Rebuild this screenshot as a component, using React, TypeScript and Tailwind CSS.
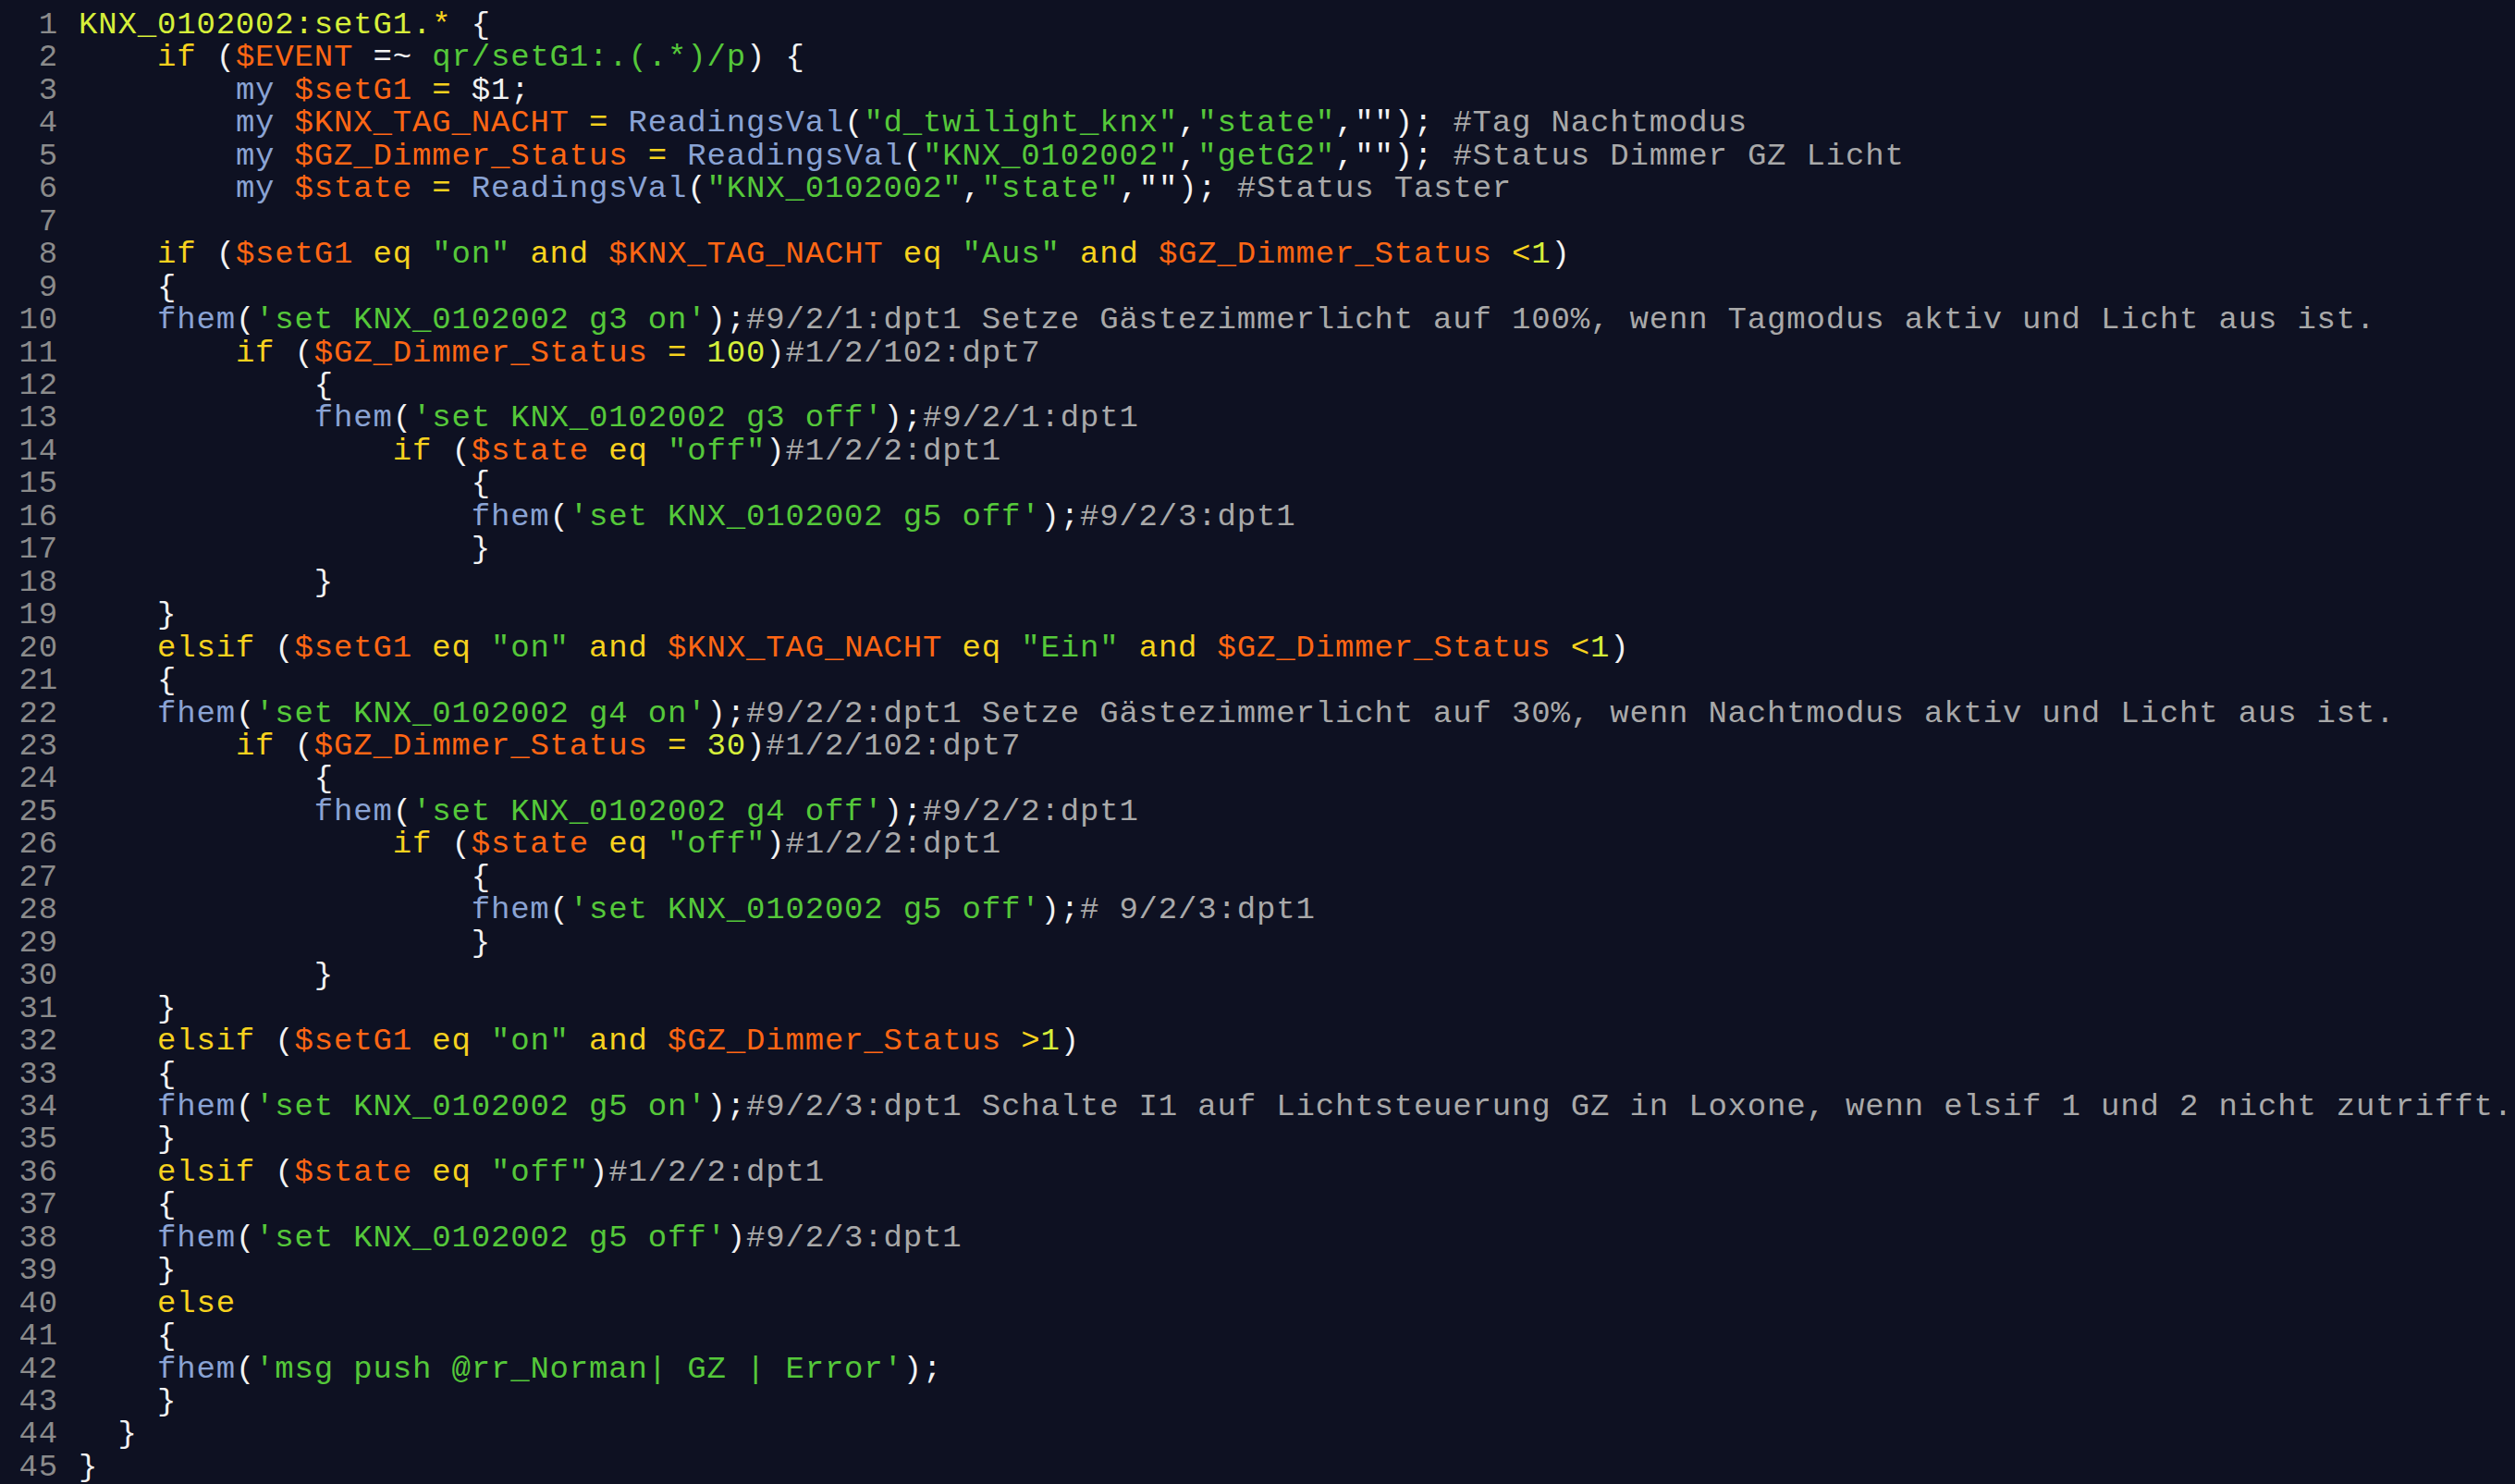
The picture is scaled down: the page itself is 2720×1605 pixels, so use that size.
const C = {
  head: "text-[#d6ef3a]",
  kw: "text-[#f7d21e]",
  v: "text-[#ff6614]",
  s: "text-[#55c83a]",
  fn: "text-[#8aa3d4]",
  c: "text-[#a9a9a9]",
  n: "text-[#d6ef3a]",
  p: "text-[#f2f2f2]",
};

const source = [
  "",
  "    if ($EVENT =~ qr/setG1:.(.*)/p) {",
  "        my $setG1 = $1;",
  '        my $KNX_TAG_NACHT = ReadingsVal("d_twilight_knx","state",""); #Tag Nachtmodus',
  '        my $GZ_Dimmer_Status = ReadingsVal("KNX_0102002","getG2",""); #Status Dimmer GZ Licht',
  '        my $state = ReadingsVal("KNX_0102002","state",""); #Status Taster',
  "",
  '    if ($setG1 eq "on" and $KNX_TAG_NACHT eq "Aus" and $GZ_Dimmer_Status <1)',
  "    {",
  "    fhem('set KNX_0102002 g3 on');#9/2/1:dpt1 Setze Gästezimmerlicht auf 100%, wenn Tagmodus aktiv und Licht aus ist.",
  "        if ($GZ_Dimmer_Status = 100)#1/2/102:dpt7",
  "            {",
  "            fhem('set KNX_0102002 g3 off');#9/2/1:dpt1",
  '                if ($state eq "off")#1/2/2:dpt1',
  "                    {",
  "                    fhem('set KNX_0102002 g5 off');#9/2/3:dpt1",
  "                    }",
  "            }",
  "    }",
  '    elsif ($setG1 eq "on" and $KNX_TAG_NACHT eq "Ein" and $GZ_Dimmer_Status <1)',
  "    {",
  "    fhem('set KNX_0102002 g4 on');#9/2/2:dpt1 Setze Gästezimmerlicht auf 30%, wenn Nachtmodus aktiv und Licht aus ist.",
  "        if ($GZ_Dimmer_Status = 30)#1/2/102:dpt7",
  "            {",
  "            fhem('set KNX_0102002 g4 off');#9/2/2:dpt1",
  '                if ($state eq "off")#1/2/2:dpt1',
  "                    {",
  "                    fhem('set KNX_0102002 g5 off');# 9/2/3:dpt1",
  "                    }",
  "            }",
  "    }",
  '    elsif ($setG1 eq "on" and $GZ_Dimmer_Status >1)',
  "    {",
  "    fhem('set KNX_0102002 g5 on');#9/2/3:dpt1 Schalte I1 auf Lichtsteuerung GZ in Loxone, wenn elsif 1 und 2 nicht zutrifft.",
  "    }",
  '    elsif ($state eq "off")#1/2/2:dpt1',
  "    {",
  "    fhem('set KNX_0102002 g5 off')#9/2/3:dpt1",
  "    }",
  "    else",
  "    {",
  "    fhem('msg push @rr_Norman| GZ | Error');",
  "    }",
  "  }",
  "}",
];

// tiny perl-ish highlighter, good enough for this snippet
const rules: [RegExp, string][] = [
  [/^#.*/, C.c],
  [/^qr\/[^/]*\/p/, C.s],
  [/^""/, C.p],
  [/^"[^"]*"|^'[^']*'/, C.s],
  [/^\$1/, C.p],
  [/^\$\w+/, C.v],
  [/^(?:if|elsif|else|eq|and)\b/, C.kw],
  [/^(?:my|fhem|ReadingsVal)\b/, C.fn],
  [/^\d+/, C.n],
  [/^=~/, C.p],
  [/^[=<>*]/, C.kw],
  [/^\s+/, C.p],
  [/^./, C.p],
];

function tokenize(line: string) {
  const out: [string, string][] = [];
  let rest = line;
  while (rest.length) {
    for (const [re, cls] of rules) {
      const m = rest.match(re);
      if (m) {
        out.push([m[0], cls]);
        rest = rest.slice(m[0].length);
        break;
      }
    }
  }
  return out;
}

function CodeLine({ no, text }: { no: number; text: string }) {
  const tokens: [string, string][] =
    no === 1
      ? [
          ["KNX_0102002:setG1.", C.head],
          ["*", C.kw],
          [" {", C.p],
        ]
      : tokenize(text);
  return (
    <div className="flex h-[35.46px] items-center">
      <span className="w-[63px] shrink-0 text-right text-[#8b8b8b]">{no}</span>
      <span className="whitespace-pre pl-[22px]">
        {tokens.map(([t, cls], i) => (
          <span key={i} className={cls}>
            {t}
          </span>
        ))}
      </span>
    </div>
  );
}

export default function App() {
  return (
    <div className="h-[1605px] w-[2720px] overflow-hidden bg-[#0e1122] pt-[10px] font-['Liberation_Mono',monospace] text-[34px] leading-[35.46px] tracking-[0.83px]">
      {source.map((line, i) => (
        <CodeLine key={i} no={i + 1} text={line} />
      ))}
    </div>
  );
}
